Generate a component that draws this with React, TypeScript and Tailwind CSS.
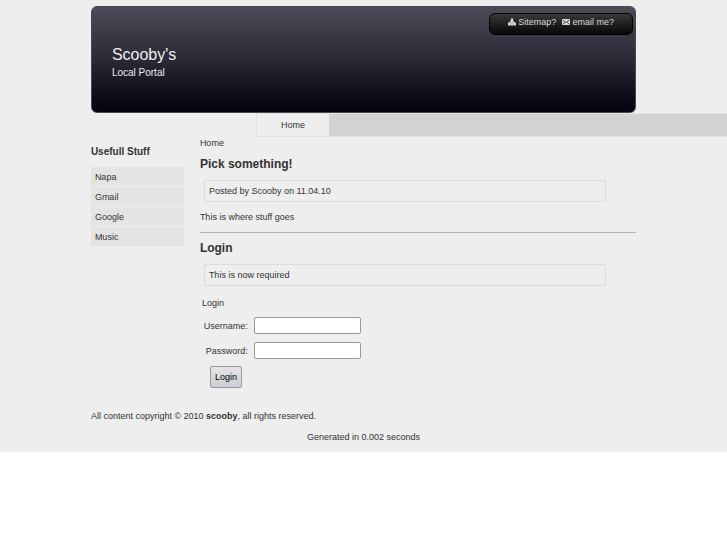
import { useState, type FormEvent } from "react";

interface LinkItem {
  label: string;
  href: string;
}

const sidebarLinks: LinkItem[] = [
  { label: "Napa", href: "#napa" },
  { label: "Gmail", href: "#gmail" },
  { label: "Google", href: "#google" },
  { label: "Music", href: "#music" },
];

export default function App() {
  return (
    <div className="bg-[#eeeeee] pt-1.5 pb-[9px] font-['Liberation_Sans',Arial,sans-serif] text-[9px] leading-3 text-[#333333]">
      <Header />
      <NavBar />

      <div className="mx-auto flex w-3/4 items-start gap-4">
        <Sidebar />
        <main className="min-w-0 flex-1">
          <p>Home</p>
          <h2 className="mt-[7px] text-[12px] leading-4 font-bold">Pick something!</h2>
          <InfoBox>Posted by Scooby on 11.04.10</InfoBox>
          <p className="mt-[9px]">This is where stuff goes</p>
          <hr className="mt-[9px] border-[#b4b4b4]" />
          <h2 className="mt-[7px] text-[12px] leading-4 font-bold">Login</h2>
          <InfoBox>This is now required</InfoBox>
          <LoginForm />
        </main>
      </div>

      <Footer />
    </div>
  );
}

function Header() {
  return (
    <header className="mx-auto flex h-[107px] w-3/4 items-start justify-between rounded-md border border-[#4a4950] bg-linear-to-b from-[#4d4b58] via-[#2b2935] to-[#05030f]">
      <div className="pt-[38px] pl-5 text-[#eeeeee]">
        <h1 className="text-[16px] leading-5">Scooby&apos;s</h1>
        <p className="text-[10px] leading-4">Local Portal</p>
      </div>
      <div className="mt-1.5 mr-0.5 flex h-[22px] w-36 items-center justify-center gap-1.5 rounded-md border border-black bg-linear-to-b from-[#3a3a3a] to-[#080808] pb-1 text-[#d8d8d8]">
        <a href="#sitemap" className="flex items-center gap-0.5">
          <SitemapIcon />
          Sitemap?
        </a>
        <a href="#email" className="flex items-center gap-0.5">
          <MailIcon />
          email me?
        </a>
      </div>
    </header>
  );
}

function SitemapIcon() {
  return (
    <svg viewBox="0 0 8 8" className="size-2" fill="currentColor" aria-hidden="true">
      <path d="M2.8.4h2.4v2.4l1.6 1.7H8v3H5.5v-3l-.8-.8v.8h.6v3H2.7v-3h.6v-.8l-.8.8v3H0v-3h1.2l1.6-1.7z" />
    </svg>
  );
}

function MailIcon() {
  return (
    <svg viewBox="0 0 8 6" className="h-1.5 w-2" aria-hidden="true">
      <rect width="8" height="6" rx="0.8" fill="currentColor" />
      <path d="M1 1.2 4 3.6 7 1.2M1 5 2.8 3.4M7 5 5.2 3.4" fill="none" stroke="#222222" strokeWidth="0.8" />
    </svg>
  );
}

function NavBar() {
  return (
    <nav className="ml-[35.2%] flex border-y border-[#e2e2e2] bg-[#d2d2d2]">
      <a href="#home" className="border-l border-[#e2e2e2] bg-[#eeeeee] px-6 py-[5px]">
        Home
      </a>
    </nav>
  );
}

function Sidebar() {
  return (
    <aside className="w-[93px] shrink-0 pt-[7px]">
      <h3 className="text-[10px] leading-4 font-bold">Usefull Stuff</h3>
      <ul className="mt-[7px] flex flex-col gap-px">
        {sidebarLinks.map((link) => (
          <li key={link.label}>
            <a href={link.href} className="block bg-[#e4e4e4] px-1 pt-1 pb-[3px] leading-3">
              {link.label}
            </a>
          </li>
        ))}
      </ul>
    </aside>
  );
}

function InfoBox({ children }: { children: string }) {
  return (
    <p className="mt-2 mr-[30px] ml-1 border border-[#dddddd] px-1 py-1">{children}</p>
  );
}

function LoginForm() {
  const [username, setUsername] = useState("");
  const [password, setPassword] = useState("");

  const handleSubmit = (e: FormEvent) => {
    e.preventDefault();
  };

  return (
    <form onSubmit={handleSubmit} className="mt-[11px]">
      <p className="pl-0.5">Login</p>
      <div className="mt-2 flex items-center">
        <label htmlFor="username" className="w-12 text-right">
          Username:
        </label>
        <input
          id="username"
          type="text"
          value={username}
          onChange={(e) => setUsername(e.target.value)}
          className="ml-1.5 h-[17px] w-[107px] rounded-xs border border-[#999999] bg-white px-1"
        />
      </div>
      <div className="mt-2 flex items-center">
        <label htmlFor="password" className="w-12 text-right">
          Password:
        </label>
        <input
          id="password"
          type="password"
          value={password}
          onChange={(e) => setPassword(e.target.value)}
          className="ml-1.5 h-[17px] w-[107px] rounded-xs border border-[#999999] bg-white px-1"
        />
      </div>
      <button
        type="submit"
        className="mt-[7px] ml-2.5 rounded-xs border border-[#999999] bg-linear-to-b from-[#e4e4e8] to-[#cdcdd5] px-1 py-1 text-black"
      >
        Login
      </button>
    </form>
  );
}

function Footer() {
  return (
    <footer className="mx-auto mt-[22px] w-3/4">
      <p>
        All content copyright © 2010 <strong>scooby</strong>, all rights reserved.
      </p>
      <p className="mt-[9px] text-center">Generated in 0.002 seconds</p>
    </footer>
  );
}
